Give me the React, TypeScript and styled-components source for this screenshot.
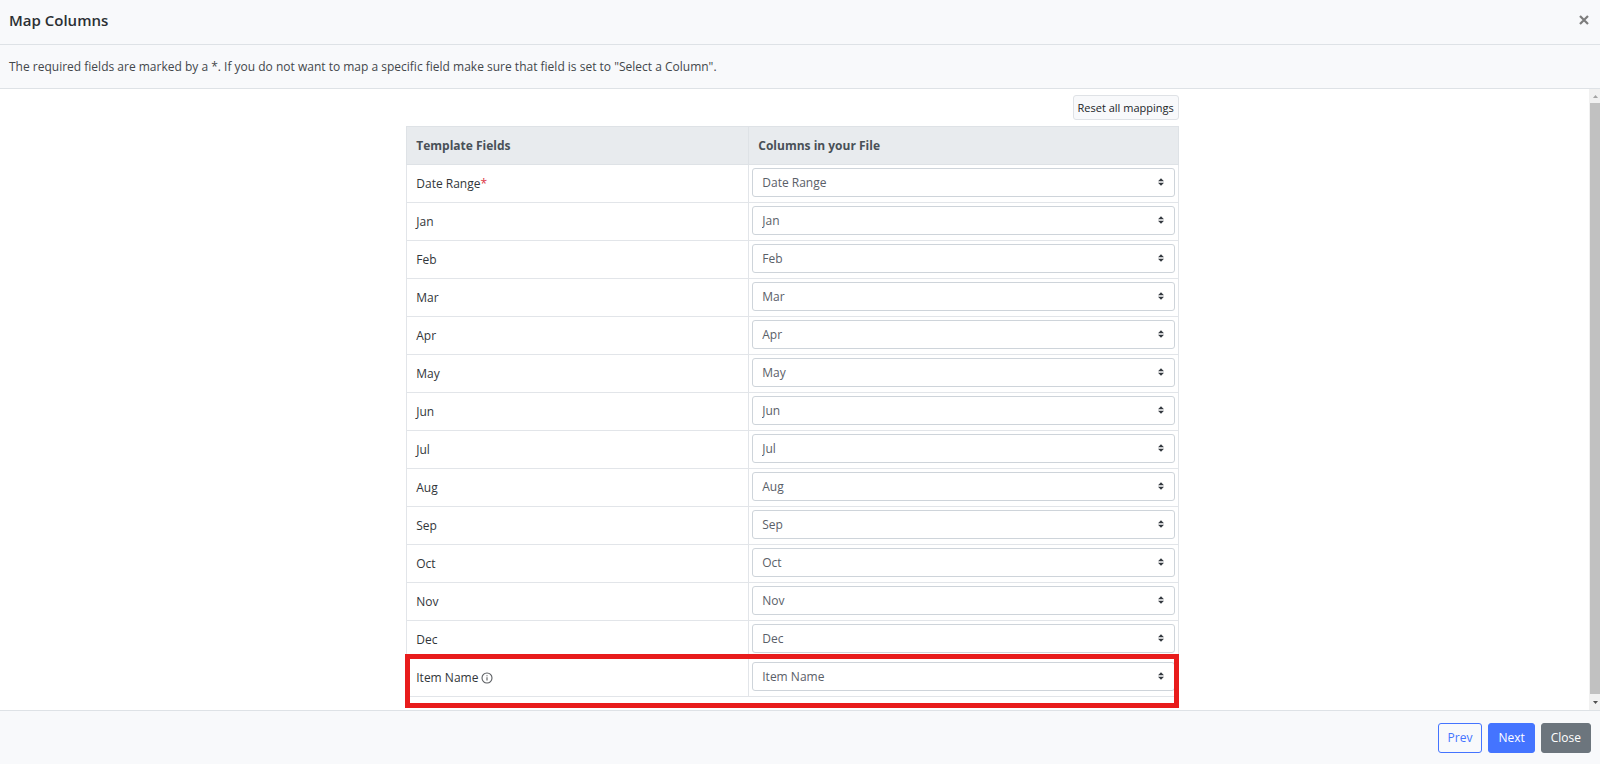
import { useState } from 'react';
import styled, { createGlobalStyle } from 'styled-components';

const months = ['Jan', 'Feb', 'Mar', 'Apr', 'May', 'Jun', 'Jul', 'Aug', 'Sep', 'Oct', 'Nov', 'Dec'];
const fields = ['Date Range', ...months, 'Item Name'];

const App = () => {
    const [mapping, setMapping] = useState<Record<string, string>>(
        Object.fromEntries(fields.map((field) => [field, field])),
    );

    return (
        <>
            <GlobalStyle />
            <Modal>
                <Header>
                    <Title>Map Columns</Title>
                    <CloseIcon type="button" aria-label="Close dialog">
                        <svg width="10" height="10" viewBox="0 0 10 10">
                            <path d="M1 1l8 8M9 1L1 9" stroke="currentColor" strokeWidth="2.2" />
                        </svg>
                    </CloseIcon>
                </Header>
                <Info>
                    The required fields are marked by a *. If you do not want to map a specific field make sure that
                    field is set to "Select a Column".
                </Info>
                <Body>
                    <Content>
                        <Panel>
                            <ResetButton type="button" onClick={() => setMapping({})}>
                                Reset all mappings
                            </ResetButton>
                            <TableWrap>
                                <Table>
                                    <thead>
                                        <tr>
                                            <FieldHead>Template Fields</FieldHead>
                                            <Th>Columns in your File</Th>
                                        </tr>
                                    </thead>
                                    <tbody>
                                        {fields.map((field) => (
                                            <tr key={field}>
                                                <FieldCell>
                                                    <FieldLabel htmlFor={field}>
                                                        {field}
                                                        {field === 'Date Range' && <Required>*</Required>}
                                                        {field === 'Item Name' && <InfoIcon />}
                                                    </FieldLabel>
                                                </FieldCell>
                                                <SelectCell>
                                                    <SelectBox>
                                                        <Select
                                                            id={field}
                                                            value={mapping[field] ?? ''}
                                                            onChange={(e) =>
                                                                setMapping({ ...mapping, [field]: e.target.value })
                                                            }
                                                        >
                                                            <option value="">Select a Column</option>
                                                            {fields.map((name) => (
                                                                <option key={name}>{name}</option>
                                                            ))}
                                                        </Select>
                                                        <Arrows viewBox="0 0 4 5" aria-hidden="true">
                                                            <path fill="#343a40" d="M2 0L0 2h4zm0 5L0 3h4z" />
                                                        </Arrows>
                                                    </SelectBox>
                                                </SelectCell>
                                            </tr>
                                        ))}
                                    </tbody>
                                </Table>
                                <Highlight />
                            </TableWrap>
                        </Panel>
                    </Content>
                    <ScrollBar aria-hidden="true">
                        <ScrollArrow viewBox="0 0 11 14">
                            <path fill="#a3a3a3" d="M4 9h5L6.500 6z" />
                        </ScrollArrow>
                        <Thumb />
                        <ScrollArrow viewBox="0 0 11 14">
                            <path fill="#505050" d="M4 5h5L6.500 8z" />
                        </ScrollArrow>
                    </ScrollBar>
                </Body>
                <Footer>
                    <FooterButton type="button" $variant="outline">
                        Prev
                    </FooterButton>
                    <FooterButton type="button" $variant="primary">
                        Next
                    </FooterButton>
                    <FooterButton type="button" $variant="secondary">
                        Close
                    </FooterButton>
                </Footer>
            </Modal>
        </>
    );
};

const InfoIcon = () => (
    <InfoSvg viewBox="0 0 12 12" aria-hidden="true">
        <circle cx="6" cy="6" r="5" fill="none" stroke="#5c5f63" strokeWidth="1.1" />
        <path d="M6 5.2v3.4M6 3.2v1.1" stroke="#5c5f63" strokeWidth="1.1" />
    </InfoSvg>
);

const GlobalStyle = createGlobalStyle`
    * {
        box-sizing: border-box;
    }
    body {
        margin: 0;
        font-family: 'Open Sans', sans-serif;
        font-size: 12px;
        line-height: 18px;
        color: #32363a;
    }
    button, select {
        font: inherit;
    }
`;

const Modal = styled.div`
    display: flex;
    flex-direction: column;
    height: 100vh;
    background-color: #fff;
`;

const Header = styled.header`
    display: flex;
    flex: none;
    align-items: center;
    justify-content: space-between;
    height: 45px;
    padding: 0 9px 4px;
    border-bottom: 1px solid #dee2e6;
    background-color: #f8f9fb;
`;

const Title = styled.h1`
    margin: 0;
    font-size: 15px;
    line-height: 20px;
    font-weight: 600;
    color: #2b2f33;
`;

const CloseIcon = styled.button`
    display: flex;
    padding: 2px;
    border: none;
    background-color: transparent;
    color: #7c7c7c;
    cursor: pointer;
`;

const Info = styled.p`
    display: flex;
    flex: none;
    align-items: center;
    min-height: 44px;
    margin: 0;
    padding: 0 9px;
    border-bottom: 1px solid #dee2e6;
    background-color: #f8f9fb;
    color: #43474b;
`;

const Body = styled.main`
    display: flex;
    flex: 1;
    min-height: 0;
`;

const Content = styled.div`
    flex: 1;
    padding: 6px 4px 0 0;
    overflow: hidden;
`;

const Panel = styled.div`
    display: flex;
    flex-direction: column;
    width: 50%;
    margin: 0 auto;
    padding: 0 10px;
`;

const ResetButton = styled.button`
    align-self: flex-end;
    height: 25px;
    margin-bottom: 6px;
    padding: 0 4px;
    border: 1px solid #dfe2e6;
    border-radius: 3px;
    background-color: #f8f9fb;
    color: #212529;
    font-size: 11px;
    cursor: pointer;
`;

const TableWrap = styled.div`
    position: relative;
`;

const Table = styled.table`
    width: 100%;
    border-collapse: collapse;
    table-layout: fixed;
`;

const Th = styled.th`
    height: 38px;
    padding: 0 9px;
    border: 1px solid #dee2e6;
    background-color: #e8ebee;
    color: #495057;
    font-weight: 700;
    text-align: left;
`;

const FieldHead = styled(Th)`
    width: 342px;
`;

const Td = styled.td`
    height: 38px;
    border: 1px solid #e2e5e9;
`;

const FieldCell = styled(Td)`
    padding: 1px 9px 0;
`;

const SelectCell = styled(Td)`
    padding: 3px 3px 5px;
`;

const FieldLabel = styled.label`
    display: flex;
    align-items: center;
`;

const Required = styled.span`
    color: #dc3545;
`;

const InfoSvg = styled.svg`
    width: 12px;
    height: 12px;
    margin-left: 3px;
`;

const SelectBox = styled.div`
    position: relative;
`;

const Select = styled.select`
    display: block;
    width: 100%;
    height: 29px;
    padding: 0 24px 0 9px;
    border: 1px solid #ced4da;
    border-radius: 3px;
    appearance: none;
    background-color: #fff;
    color: #5a6068;
`;

const Arrows = styled.svg`
    position: absolute;
    top: 10px;
    right: 11px;
    width: 6px;
    height: 8px;
    pointer-events: none;
`;

/* red frame over the last row */
const Highlight = styled.div`
    position: absolute;
    right: 0;
    bottom: -11px;
    left: -1px;
    height: 54px;
    border: 5px solid #e81c1c;
    pointer-events: none;
`;

const ScrollBar = styled.div`
    display: flex;
    flex: none;
    flex-direction: column;
    width: 11px;
    background-color: #f1f1f1;
`;

const ScrollArrow = styled.svg`
    flex: none;
    width: 11px;
    height: 14px;
`;

const Thumb = styled.div`
    flex: 1;
    margin: 0 0 2px 1px;
    background-color: #c1c1c1;
`;

const Footer = styled.footer`
    display: flex;
    flex: none;
    align-items: center;
    justify-content: flex-end;
    gap: 6px;
    height: 54px;
    padding: 0 9px;
    border-top: 1px solid #dee2e6;
    background-color: #f8f9fb;
`;

const variants = {
    outline: { background: 'transparent', border: '#4474ff', color: '#4474ff' },
    primary: { background: '#4474ff', border: '#4474ff', color: '#fff' },
    secondary: { background: '#6c757d', border: '#6c757d', color: '#fff' },
};

const FooterButton = styled.button<{ $variant: keyof typeof variants }>`
    height: 30px;
    padding: 0 9px;
    border: 1px solid ${(props) => variants[props.$variant].border};
    border-radius: 3px;
    background-color: ${(props) => variants[props.$variant].background};
    color: ${(props) => variants[props.$variant].color};
    cursor: pointer;
`;

export default App;
